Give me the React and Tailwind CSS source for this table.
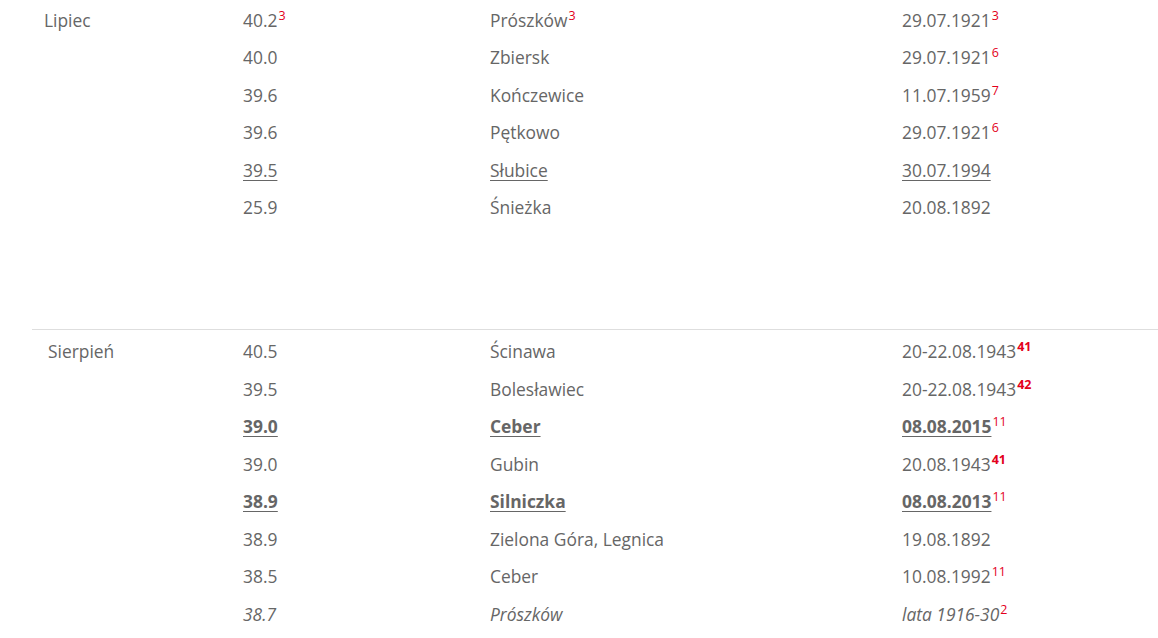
const Sup = ({ children, bold }) => (
  <sup className={`text-[12.5px] text-[#e3001b] relative -top-[4px] ml-px ${bold ? 'font-bold' : 'font-normal'}`}>{children}</sup>
);

const lipiec = [
  { t: '40.2', ts: '3', p: 'Prószków', ps: '3', d: '29.07.1921', ds: '3' },
  { t: '40.0', p: 'Zbiersk', d: '29.07.1921', ds: '6' },
  { t: '39.6', p: 'Kończewice', d: '11.07.1959', ds: '7' },
  { t: '39.6', p: 'Pętkowo', d: '29.07.1921', ds: '6' },
  { t: '39.5', p: 'Słubice', d: '30.07.1994', link: true },
  { t: '25.9', p: 'Śnieżka', d: '20.08.1892' },
];

const sierpien = [
  { t: '40.5', p: 'Ścinawa', d: '20-22.08.1943', ds: '41', dsBold: true },
  { t: '39.5', p: 'Bolesławiec', d: '20-22.08.1943', ds: '42', dsBold: true },
  { t: '39.0', p: 'Ceber', d: '08.08.2015', ds: '11', link: true, bold: true },
  { t: '39.0', p: 'Gubin', d: '20.08.1943', ds: '41', dsBold: true },
  { t: '38.9', p: 'Silniczka', d: '08.08.2013', ds: '11', link: true, bold: true },
  { t: '38.9', p: 'Zielona Góra, Legnica', d: '19.08.1892' },
  { t: '38.5', p: 'Ceber', d: '10.08.1992', ds: '11' },
  { t: '38.7', p: 'Prószków', d: 'lata 1916-30', ds: '2', italic: true },
];

const Cell = ({ text, sup, supBold, row }) => {
  const cls = [
    row.link ? 'underline underline-offset-[3px] decoration-1' : '',
    row.bold ? 'font-bold' : '',
    row.italic ? 'italic' : '',
  ].join(' ');
  return (
    <div className="flex items-center">
      <span className={cls}>{text}</span>
      {sup && <Sup bold={supBold}>{sup}</Sup>}
    </div>
  );
};

const Section = ({ label, rows, labelPad }) => (
  <div className="grid grid-cols-[211px_247px_412px_1fr]">
    <div className={`${labelPad} h-[37.5px] flex items-center`}>{label}</div>
    <div className="col-span-3 flex flex-col">
      {rows.map((r, i) => (
        <div key={i} className="grid grid-cols-[247px_412px_1fr] h-[37.5px]">
          <Cell text={r.t} sup={r.ts} row={r} />
          <Cell text={r.p} sup={r.ps} row={r} />
          <Cell text={r.d} sup={r.ds} supBold={r.dsBold} row={r} />
        </div>
      ))}
    </div>
  </div>
);

export default function App() {
  return (
    <div className="bg-white w-[1158px] h-[638px] overflow-hidden text-[17.4px] text-[#666] font-['Open_Sans',sans-serif]">
      <div className="pl-[32px] pt-px">
        <Section label="Lipiec" rows={lipiec} labelPad="pl-[12px]" />
        <div className="h-[103px]" />
        <div className="border-t border-[#dedede] pt-[2.5px]">
          <Section label="Sierpień" rows={sierpien} labelPad="pl-[16px]" />
        </div>
      </div>
    </div>
  );
}
